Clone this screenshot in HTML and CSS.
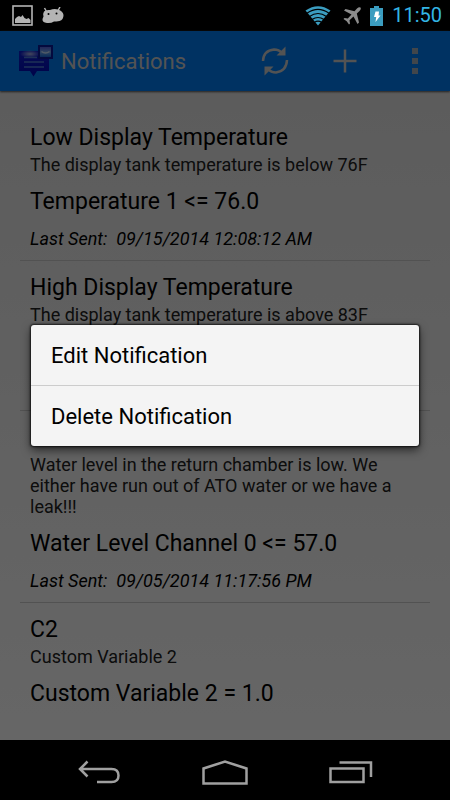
FILE: index.html
```
<!DOCTYPE html>
<html lang="en">

<head>
    <meta charset="utf-8">
    <meta name="viewport" content="width=device-width, initial-scale=1">
    <title>Notifications</title>
    <link rel="stylesheet" href="styles.css">
</head>

<body>
    <div class="status">
        <svg width="21" height="21" viewBox="0 0 21 21">
            <rect x="1" y="1" width="19" height="19" fill="none" stroke="#b4b4b4" stroke-width="1.6"/>
            <path d="M3 18v-4l2-2 2-1 2 1 1.500-2 2 3 2 1 2-1 2 2v3z" fill="#b4b4b4"/>
        </svg>
        <svg width="22" height="17" viewBox="0 0 22 17">
            <path d="M2.500 1l2 3.500M18 0l-2 3.500" stroke="#b4b4b4" stroke-width="1.500"/>
            <path d="M2 4.500Q4 2.500 8 3Q12 1.500 16 2.500Q21 4 21.500 8Q21.500 13 17.500 14Q14 14.500 12 14.500Q9 16.500 5 16Q0 15.500 0.500 12L1.500 9.500Q0.500 7 2 4.500z" fill="#b4b4b4"/>
            <circle cx="6.500" cy="7" r="1" fill="#000"/>
            <circle cx="14.500" cy="6.500" r="1" fill="#000"/>
        </svg>
        <div class="status-right">
            <svg width="26" height="20" viewBox="0 0 26 20">
                <path d="M0.500 4.500Q13-4 25.500 4.500L13 19.500z" fill="#3b9dc0"/>
                <path d="M2 7.300Q13-0.500 24 7.300M4.500 10.500Q13 4.500 21.500 10.500M7 13.500Q13 9.500 19 13.500M9.500 16.300Q13 14 16.500 16.300" fill="none" stroke="#000" stroke-width="1.200"/>
            </svg>
            <svg class="plane" width="18" height="18" viewBox="0 0 18 18">
                <path d="M17.500 0.500Q16-0.500 14 1.500L11.500 4.200L2.500 2L1 3.500L8.500 7.500L4.800 11.500L1.500 11L0.500 12L3.700 14.300L6 17.500L7 16.500L6.500 13.200L10.500 9.500L14.500 17L16 15.500L13.800 6.500L16.500 4Q18.500 2 17.500 0.500z" fill="#8c8c8c"/>
            </svg>
            <svg width="13" height="20" viewBox="0 0 13 20">
                <path d="M4 0h5v2h4v18H0V2h4z" fill="#3b9dc0"/>
                <path d="M5.500 5.500h3.500l-.5 4h2L5.500 16l.7-5H4z" fill="#fff"/>
            </svg>
            <span class="clock">11:50</span>
        </div>
    </div>

    <div class="app">
        <header class="bar">
            <svg class="logo" width="34" height="32" viewBox="0 0 34 32">
                <defs>
                    <linearGradient id="bubble" x1="0" y1="0" x2="0" y2="1">
                        <stop offset="0" stop-color="#1020d0"/>
                        <stop offset="1" stop-color="#0008b8"/>
                    </linearGradient>
                    <radialGradient id="shine">
                        <stop offset="0" stop-color="#a8b4e8"/>
                        <stop offset="1" stop-color="#a8b4e8" stop-opacity="0"/>
                    </radialGradient>
                    <linearGradient id="tank" x1="0" y1="0" x2="0" y2="1">
                        <stop offset="0" stop-color="#5050d8"/>
                        <stop offset=".5" stop-color="#70a8f0"/>
                        <stop offset="1" stop-color="#0860d8"/>
                    </linearGradient>
                </defs>
                <path d="M0 6h30v20H18l-3.500 5.500L11 26H0z" fill="url(#bubble)"/>
                <ellipse cx="11" cy="9" rx="10" ry="4" fill="url(#shine)"/>
                <path d="M5 12.500h13M5 17h20M5 22h20" stroke="#4c7cd8" stroke-width="1.500"/>
                <rect x="20" y="1" width="13" height="12" fill="url(#tank)" stroke="#0b1a9c" stroke-width="2"/>
                <path d="M22.500 6.500q4 3 8 0" fill="none" stroke="#c8e0ff" stroke-width="1.500"/>
            </svg>
            <h1>Notifications</h1>
            <button class="action" aria-label="Refresh">
                <svg width="28" height="30" viewBox="0 0 28 30">
                    <path d="M2 15Q2.500 4.500 13 3.500Q18 3.500 21 7M26 14Q25.500 25 15 26.500Q10 26.500 7 23" fill="none" stroke="#d0d0d0" stroke-width="2.500"/>
                    <path d="M24.500 0.500V9.500H15.500zM3.500 29.500V20.500H12.500z" fill="#d0d0d0"/>
                </svg>
            </button>
            <button class="action" aria-label="Add">
                <svg width="24" height="24" viewBox="0 0 24 24">
                    <path d="M12 0.500v23M0.500 12h23" stroke="#d0d0d0" stroke-width="2.500"/>
                </svg>
            </button>
            <button class="action" aria-label="More options">
                <svg width="6" height="26" viewBox="0 0 6 26">
                    <path d="M0 0h6v6H0zM0 10h6v6H0zM0 20h6v6H0z" fill="#a4b0bc"/>
                </svg>
            </button>
        </header>

        <main>
            <ul class="list">
                <li>
                    <h2>Low Display Temperature</h2>
                    <p class="desc">The display tank temperature is below 76F</p>
                    <p class="cond">Temperature 1 &lt;= 76.0</p>
                    <p class="sent">Last Sent:&nbsp; 09/15/2014 12:08:12 AM</p>
                </li>
                <li>
                    <h2>High Display Temperature</h2>
                    <p class="desc">The display tank temperature is above 83F</p>
                    <p class="cond">&nbsp;</p>
                    <p class="sent">&nbsp;</p>
                </li>
                <li>
                    <h2>&nbsp;</h2>
                    <p class="desc">Water level in the return chamber is low. We either have run out of ATO water or we have a leak!!!</p>
                    <p class="cond">Water Level Channel 0 &lt;= 57.0</p>
                    <p class="sent">Last Sent:&nbsp; 09/05/2014 11:17:56 PM</p>
                </li>
                <li>
                    <h2>C2</h2>
                    <p class="desc">Custom Variable 2</p>
                    <p class="cond">Custom Variable 2 = 1.0</p>
                </li>
            </ul>
        </main>

        <div class="scrim">
            <div class="menu" role="dialog" aria-label="Notification options">
                <button>Edit Notification</button>
                <button>Delete Notification</button>
            </div>
        </div>
    </div>

    <nav class="navbar">
        <button aria-label="Back">
            <svg width="42" height="24" viewBox="0 0 42 24">
                <path d="M2 9h31.500q7 0 7 6.500t-7 6.500H19M9.500 1.500L2 9l7.500 7.500" fill="none" stroke="#a0a0a0" stroke-width="2.500"/>
            </svg>
        </button>
        <button aria-label="Home">
            <svg width="46" height="26" viewBox="0 0 46 26">
                <path d="M1.500 24.500v-15L23 2.500l21.500 7v15z" fill="none" stroke="#a0a0a0" stroke-width="2.500"/>
            </svg>
        </button>
        <button aria-label="Recent apps">
            <svg width="44" height="24" viewBox="0 0 44 24">
                <path d="M1.500 8.500h33v13.500h-33zM10.500 2.500h31.500v14.500" fill="none" stroke="#a0a0a0" stroke-width="2.500"/>
            </svg>
        </button>
    </nav>
</body>

</html>
```
FILE: styles.css
```
* {
    box-sizing: border-box;
}

body {
    margin: 0;
    min-height: 100vh;
    display: flex;
    flex-direction: column;
    background: #000;
    color: #000;
    font-family: Roboto, "Open Sans", sans-serif;
}

h1,
h2,
p {
    margin: 0;
    font-weight: 400;
}

button {
    border: 0;
    padding: 0;
    background: none;
    font: inherit;
    cursor: pointer;
}

svg {
    display: block;
    flex: none;
}

.status {
    display: flex;
    align-items: center;
    gap: 9px;
    height: 31px;
    padding: 0 8px 0 12px;
}

.status-right {
    display: flex;
    align-items: center;
    gap: 9px;
    margin-left: auto;
}

.plane {
    margin-left: 3px;
}

.clock {
    color: #33b5e5;
    font-size: 20px;
    line-height: 31px;
}

.app {
    position: relative;
    flex: 1;
    display: flex;
    flex-direction: column;
    background: linear-gradient(#e4e4e4, #fff);
}

.bar {
    display: flex;
    align-items: center;
    height: 60px;
    padding-left: 19px;
    background: #007df5;
    box-shadow: 0 1px 2px #555;
}

.bar h1 {
    flex: 1;
    margin-left: 8px;
    color: #d0d0d0;
    font-size: 22px;
}

.action {
    display: flex;
    align-items: center;
    justify-content: center;
    width: 70px;
    height: 60px;
}

.list {
    margin: 0;
    padding: 20px 20px 0;
    list-style: none;
}

.list li {
    padding: 13px 10px 11px;
    border-bottom: 1px solid #ccc;
}

.list li:last-child {
    border-bottom: 0;
}

.list h2,
.cond {
    font-size: 23px;
    line-height: 28px;
}

.desc,
.sent {
    font-size: 18px;
    line-height: 21px;
}

.desc {
    margin: 2px 0 13px;
    color: #222;
}

.sent {
    margin-top: 12px;
    font-style: italic;
}

.scrim {
    position: absolute;
    inset: 0;
    display: flex;
    align-items: center;
    justify-content: center;
    padding: 0 31px;
    background: rgba(0, 0, 0, .6);
}

.menu {
    flex: 1;
    background: #f4f4f4;
    border-radius: 3px;
    box-shadow: 0 0 2px 1px rgba(0, 0, 0, .7), 0 4px 10px rgba(0, 0, 0, .6);
}

.menu button {
    display: block;
    width: 100%;
    height: 60px;
    padding: 0 20px;
    color: #000;
    font-size: 22px;
    text-align: left;
}

.menu button + button {
    height: 61px;
    border-top: 1px solid #ccc;
}

.navbar {
    display: flex;
    justify-content: center;
    height: 60px;
}

.navbar button {
    display: flex;
    align-items: center;
    justify-content: center;
    width: 28%;
    padding-top: 4px;
}
```
